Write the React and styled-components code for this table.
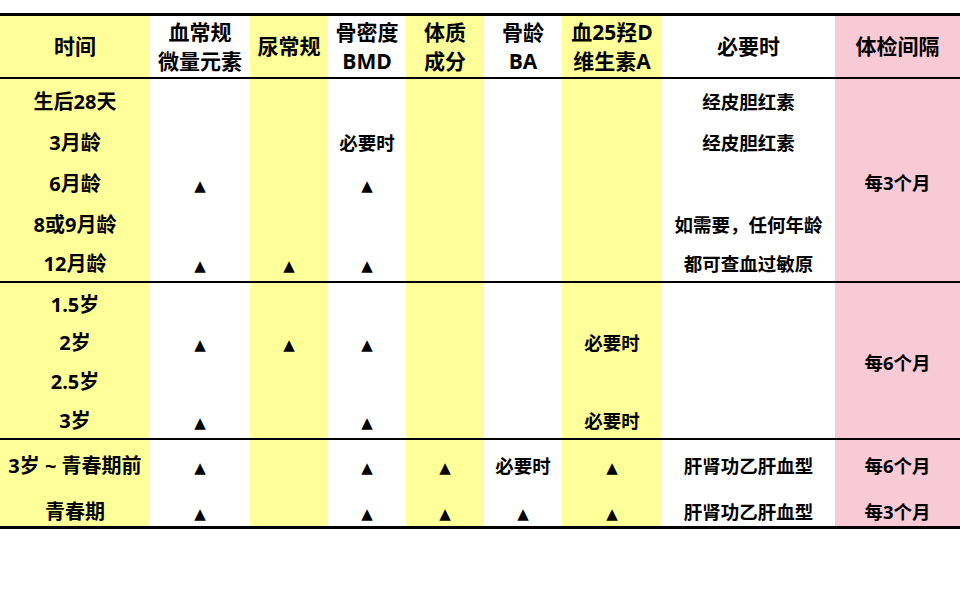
import React from "react";
import styled, { createGlobalStyle } from "styled-components";

const Global = createGlobalStyle`
  html, body { margin: 0; padding: 0; background: #ffffff; }
  body { font-family: "Open Sans", "Noto Sans CJK SC", sans-serif; }
`;

const TONES = {
  y: "#FFFF99",
  w: "#FFFFFF",
  p: "#F8CAD5",
};

// column tones, left to right
const COLS = ["y", "w", "y", "w", "y", "w", "y", "w", "p"];
const WIDTHS = [150, 100, 78, 78, 78, 78, 100, 173, 125];

const Page = styled.div`
  width: 960px;
  padding-top: 13px;
`;

const Table = styled.table`
  width: 960px;
  table-layout: fixed;
  border-collapse: collapse;
  border-top: 3px solid #000;
  border-bottom: 3px solid #000;
  font-family: "Open Sans", "Noto Sans CJK SC", sans-serif;
  font-weight: 700;
  color: #000;
`;

const Head = styled.thead`
  border-bottom: 2px solid #000;
`;

const Group = styled.tbody`
  & + & {
    border-top: 2px solid #000;
  }
`;

const Row = styled.tr`
  height: ${(p) => p.$h}px;
  & > td {
    padding-top: ${(p) => p.$pt}px;
  }
`;

const HeadCell = styled.th`
  background: ${(p) => TONES[p.$tone]};
  height: 61px;
  padding: 0;
  font-size: 21px;
  line-height: 29px;
  text-align: center;
  vertical-align: middle;
  font-weight: 700;
  white-space: nowrap;
`;

const Cell = styled.td`
  background: ${(p) => TONES[p.$tone]};
  padding: 0;
  font-size: ${(p) => (p.$lead ? 20 : 18.5)}px;
  line-height: 24px;
  text-align: center;
  vertical-align: middle;
  white-space: nowrap;
`;

const Mark = styled.span`
  font-family: "DejaVu Sans", sans-serif;
  font-size: 15px;
  line-height: 1;
`;

const headers = [
  ["时间"],
  ["血常规", "微量元素"],
  ["尿常规"],
  ["骨密度", "BMD"],
  ["体质", "成分"],
  ["骨龄", "BA"],
  ["血25羟D", "维生素A"],
  ["必要时"],
  ["体检间隔"],
];

const T = "▲";

// each row: 8 entries (columns 0..7); interval column handled per group
const groups = [
  {
    interval: "每3个月",
    rows: [
      { h: 42, pt: 5, c: ["生后28天", "", "", "", "", "", "", "经皮胆红素"] },
      { h: 41, pt: 5, c: ["3月龄", "", "", "必要时", "", "", "", "经皮胆红素"] },
      { h: 41, pt: 5, c: ["6月龄", T, "", T, "", "", "", ""] },
      { h: 40, pt: 5, c: ["8或9月龄", "", "", "", "", "", "", "如需要，任何年龄"] },
      { h: 40, pt: 5, c: ["12月龄", T, T, T, "", "", "", "都可查血过敏原"] },
    ],
  },
  {
    interval: "每6个月",
    rows: [
      { h: 39, pt: 5, c: ["1.5岁", "", "", "", "", "", "", ""] },
      { h: 39, pt: 5, c: ["2岁", T, T, T, "", "", "必要时", ""] },
      { h: 39, pt: 5, c: ["2.5岁", "", "", "", "", "", "", ""] },
      { h: 40, pt: 5, c: ["3岁", T, "", T, "", "", "必要时", ""] },
    ],
  },
  {
    rows: [
      { h: 47, pt: 5, c: ["3岁 ~ 青春期前", T, "", T, T, "必要时", T, "肝肾功乙肝血型"], i: "每6个月" },
      { h: 41, pt: 12, c: ["青春期", T, "", T, T, T, T, "肝肾功乙肝血型"], i: "每3个月" },
    ],
  },
];

function Content({ value }) {
  if (value === T) return <Mark>{T}</Mark>;
  return value;
}

export default function App() {
  return (
    <Page>
      <Global />
      <Table>
        <colgroup>
          {WIDTHS.map((w, i) => (
            <col key={i} style={{ width: w }} />
          ))}
        </colgroup>
        <Head>
          <tr>
            {headers.map((lines, i) => (
              <HeadCell key={i} $tone={COLS[i]}>
                {lines.map((l, j) => (
                  <div key={j}>{l}</div>
                ))}
              </HeadCell>
            ))}
          </tr>
        </Head>
        {groups.map((g, gi) => (
          <Group key={gi}>
            {g.rows.map((r, ri) => (
              <Row key={ri} $h={r.h} $pt={r.pt}>
                {r.c.map((v, ci) => (
                  <Cell key={ci} $tone={COLS[ci]} $lead={ci === 0}>
                    <Content value={v} />
                  </Cell>
                ))}
                {g.interval ? (
                  ri === 0 ? (
                    <Cell $tone="p" rowSpan={g.rows.length}>
                      {g.interval}
                    </Cell>
                  ) : null
                ) : (
                  <Cell $tone="p">{r.i}</Cell>
                )}
              </Row>
            ))}
          </Group>
        ))}
      </Table>
    </Page>
  );
}
